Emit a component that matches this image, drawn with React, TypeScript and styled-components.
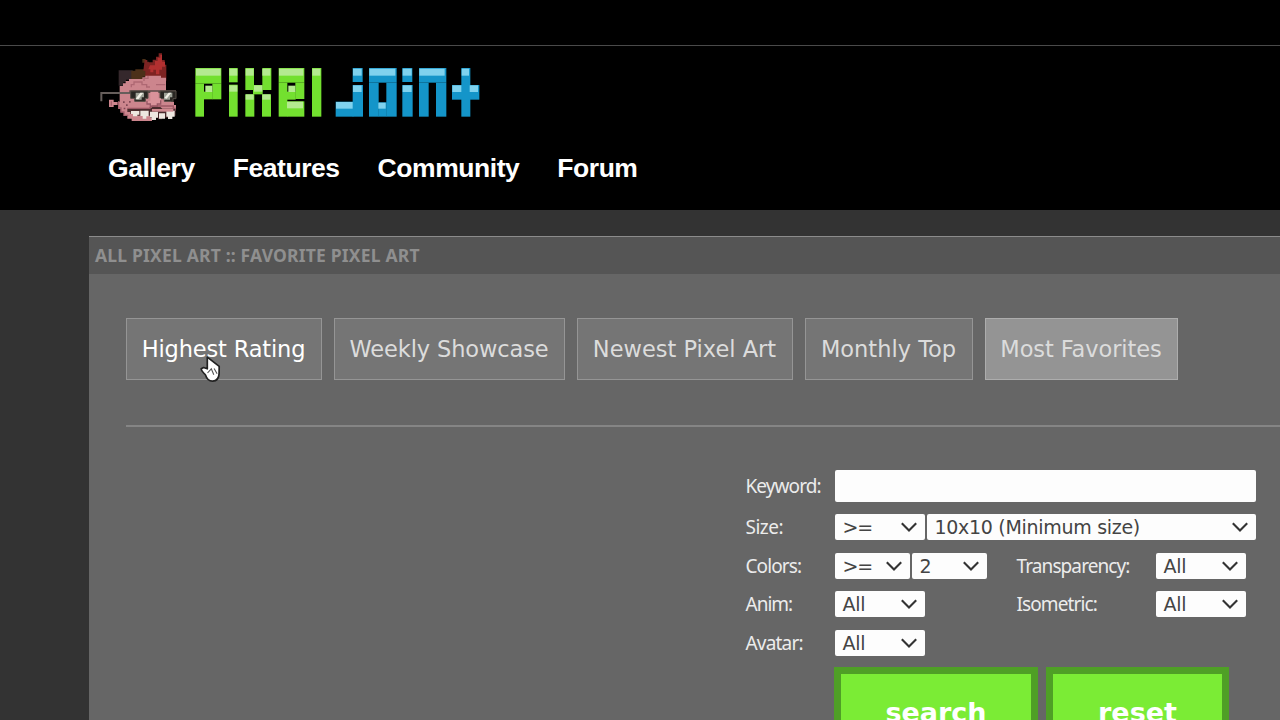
import React from "react";
import styled, { createGlobalStyle } from "styled-components";

const GlobalStyle = createGlobalStyle`
  * { box-sizing: border-box; }
  html, body { margin: 0; height: 100%; overflow: hidden; background: #333; }
`;

const Page = styled.div`
  position: relative;
  width: 1280px;
  height: 720px;
  overflow: hidden;
  background: #333;
  font-family: "DejaVu Sans", Verdana, sans-serif;
`;

const TopStrip = styled.div`
  height: 46px;
  background: #000;
  border-bottom: 1px solid #4a4a4a;
`;

const Header = styled.header`
  height: 164px;
  padding: 6px 0 0 98px;
  background: #000;
`;

const Brand = styled.div`
  display: flex;
  height: 75px;
  gap: 5px;
  svg { display: block; flex: none; }
`;

const Nav = styled.nav`
  display: flex;
  gap: 38px;
  margin: 20px 0 0 10px;
`;

const NavLink = styled.a`
  color: #fff;
  font: bold 26.5px/42px "Liberation Sans", Arial, sans-serif;
  letter-spacing: -0.45px;
`;

const Panel = styled.main`
  width: 1191px;
  height: 484px;
  margin: 26px 0 0 89px;
  background: #666;
  border-top: 1px solid #8c8c8c;
`;

const Crumbs = styled.div`
  height: 37px;
  padding-left: 6px;
  background: #555;
  color: #8f8f8f;
  font: bold 17.5px/37px "Noto Sans", Tahoma, sans-serif;
  white-space: nowrap;
`;

const Tracked = styled.span<{ $spacing: number }>`
  letter-spacing: ${(p) => p.$spacing}px;
`;

const Tabs = styled.div`
  display: flex;
  gap: 12px;
  margin: 44px 0 0 36.5px;
`;

const Tab = styled.button<{ $width: number; $spacing?: number; $state?: "hover" | "active" }>`
  flex: none;
  width: ${(p) => p.$width}px;
  height: 62px;
  padding: 0 0 1px;
  border: 1px solid ${(p) => (p.$state === "active" ? "#adadad" : "#959595")};
  background: ${(p) => (p.$state === "active" ? "#949494" : "#757575")};
  color: ${(p) => (p.$state === "hover" ? "#fff" : "#dcdcdc")};
  font: 22.5px/60px "DejaVu Sans", Verdana, sans-serif;
  letter-spacing: ${(p) => p.$spacing ?? 0}px;
  white-space: nowrap;
`;

const Divider = styled.div`
  height: 2px;
  margin: 44.5px 0 0 36.5px;
  background: #858585;
`;

const SearchForm = styled.form`
  width: 512px;
  margin: 43.5px 0 0 655.5px;
`;

const FormRow = styled.div<{ $height: number }>`
  display: flex;
  align-items: flex-start;
  height: ${(p) => p.$height}px;
`;

const Label = styled.label<{ $width: number; $top?: number; $offset?: number }>`
  flex: none;
  width: ${(p) => p.$width}px;
  margin-left: ${(p) => p.$offset ?? 1}px;
  padding-top: ${(p) => p.$top ?? 0}px;
  color: #ececec;
  font: 19px/26px "Noto Sans", Tahoma, sans-serif;
  white-space: nowrap;
`;

const KeywordInput = styled.input`
  width: 421px;
  height: 32px;
  padding: 0 8px;
  border: 0;
  border-radius: 2px;
  background: #fdfdfd;
`;

const Select = styled.div<{ $width: number }>`
  display: flex;
  flex: none;
  align-items: center;
  justify-content: space-between;
  width: ${(p) => p.$width}px;
  height: 26px;
  margin-right: 2px;
  padding: 0 7px 0 8px;
  border-radius: 2px;
  background: #fdfdfd;
  color: #444;
  font-size: 19px;
  line-height: 26px;
  white-space: nowrap;
`;

const Actions = styled.div`
  display: flex;
  gap: 8px;
  margin-left: 89.5px;
`;

const ActionButton = styled.button<{ $width: number }>`
  width: ${(p) => p.$width}px;
  height: 91px;
  padding: 0;
  border: 7px solid #4f9f26;
  background: #7bec35;
  color: #fff;
  font: bold 27px/76px "DejaVu Sans", Verdana, sans-serif;
`;

const Pointer = styled.svg`
  position: absolute;
  left: 199px;
  top: 355px;
`;

const Chevron = () => (
  <svg width="18" height="12" viewBox="0 0 18 12" fill="none">
    <path d="M1.8 2.2 9 9.4l7.2-7.2" stroke="#333" strokeWidth="2.1" />
  </svg>
);

const Dropdown = ({ width, value, spacing = -0.3 }: { width: number; value: string; spacing?: number }) => (
  <Select $width={width}>
    <Tracked $spacing={spacing}>{value}</Tracked>
    <Chevron />
  </Select>
);

type Block = [number, number, number, number];

// Wordmark blocks: x, y, width, height, three units to the pixel.
const green: Block[] = [
  [31, 39, 78, 47], [31, 86, 26, 99], [82, 86, 27, 47], [57, 110, 26, 23],
  [132, 39, 26, 43], [132, 89, 26, 96],
  [181, 39, 26, 66], [232, 39, 27, 66], [204, 90, 29, 28], [181, 118, 27, 67], [231, 118, 27, 67],
  [281, 39, 77, 44], [281, 83, 26, 102], [331, 83, 27, 49], [306, 110, 26, 24], [306, 139, 52, 46],
  [381, 39, 28, 146],
];
const greenShine: Block[] = [
  [33, 41, 74, 21], [61, 92, 21, 19], [133, 41, 24, 21], [133, 91, 24, 19],
  [182, 41, 24, 21], [232, 41, 24, 21], [207, 91, 25, 19], [182, 118, 24, 16], [232, 118, 24, 16],
  [282, 41, 73, 21], [310, 92, 21, 19], [306, 140, 48, 20], [382, 41, 24, 21],
];
const blue: Block[] = [
  [83, 39, 30, 42], [83, 90, 31, 95], [32, 140, 53, 45],
  [132, 39, 83, 44], [132, 83, 29, 102], [184, 83, 31, 102], [160, 142, 25, 43],
  [232, 39, 30, 42], [232, 90, 31, 95],
  [282, 39, 82, 44], [282, 83, 29, 102], [333, 83, 31, 102],
  [409, 39, 27, 146], [381, 90, 82, 44],
];
const blueShine: Block[] = [
  [84, 41, 26, 21], [84, 91, 26, 20], [33, 141, 50, 20],
  [133, 41, 78, 21], [160, 143, 22, 18], [233, 41, 27, 21], [233, 91, 27, 20],
  [283, 41, 76, 21], [410, 41, 22, 21], [382, 91, 27, 20], [434, 91, 25, 20],
];

const Blocks = ({ items, fill }: { items: Block[]; fill: string }) => (
  <g fill={fill}>
    {items.map(([x, y, w, h], i) => (
      <rect key={i} x={x} y={y} width={w} height={h} />
    ))}
  </g>
);

const WordmarkSvg = styled.svg`
  margin-top: 3px;
`;

const Wordmark = () => (
  <WordmarkSvg width="310" height="75" viewBox="0 0 930 225">
    <Blocks items={green} fill="#73e02f" />
    <Blocks items={greenShine} fill="#b4ea90" />
    <g transform="translate(420 0)">
      <Blocks items={blue} fill="#1495c9" />
      <Blocks items={blueShine} fill="#7fd2ee" />
    </g>
  </WordmarkSvg>
);

const Mascot = () => (
  <svg width="82" height="75" viewBox="24 36 246 225">
    <path d="M86 91h42v28h-20v8h-8v10H86z" fill="#35282c" />
    <path d="M124 92h12v-4h30V68h-9V57h10v8h10v45h-19v7h-34z" fill="#4c3019" />
    <path d="M164 60h8v7h16v-8h10V50h8V40h10v20h8v14h5v48h-63V92h-6z" fill="#7d2322" />
    <path d="M180 76h15V63h8V53h8v-8h5v20h9v15h-9v9h-8v14h-10V89h-8v8h-9v-9h-6z" fill="#b23030" />
    <path d="M89 138h10v-8h8v-7h10v-6h40v-5h9v-5h47v6h15v38l7 22 9 12h8v10h6v17h-11l-8 10h-48l-5 11v10h-61v-7h-13v-9h-10v-10h-10v-10h-7v-22h4z" fill="#cc858d" />
    <path d="M124 142v-8h8v-8h24v8h14v7h10m18-7h28M162 123v-8h12v-7" fill="none" stroke="#ae6873" strokeWidth="4" />
    <path d="M34 184v-25h90" fill="none" stroke="#665e5b" strokeWidth="6" />
    <path d="M118 151h140v8H118z" fill="#5a4b49" />
    <path d="M122 153h52v22h-8v9h-32v-9h-12zM210 153h48v23h-9v8h-26v-8h-13z" fill="#282622" stroke="#544c45" strokeWidth="3" />
    <path d="M137 158h25v14h-7v7h-18zM222 158h25v14h-7v7h-18z" fill="#9da196" />
    <path d="m137 176 14-18h9l-15 20zM223 174l13-16h8l-14 18z" fill="#f0efe5" />
    <path d="M181 155h24v20h8v17h-12v7h-20v-7h-10v-9h10z" fill="#d9929a" />
    <path d="M171 183v9h10v7h21v-7h10v-11" fill="none" stroke="#965765" strokeWidth="4" />
    <path d="M57 179h14v7h12v9H71v6H57z" fill="#cc858d" />
    <path d="M64 184v13M86 184v20h7v12h9v10h13" fill="none" stroke="#a45f6c" strokeWidth="4" />
    <path d="M99 184h5v5h-5zM108 193h5v5h-5zM117 183h5v5h-5zM101 203h5v5h-5z" fill="#7d4654" />
    <path d="M112 206h68l7-5h24l6 5h40v21h-11v6h-30v5h-12v-5h-23v-6h-40v-5h-20v-6h-9z" fill="#4a2b2d" />
    <path d="M123 213h25v11h-6v5h-13v-7h-6zM151 212h25v17h-7v7h-11v-8h-7zM180 215h24v18h-6v7h-13v-8h-5zM207 220h18v16h-18zM229 212h25v18h-7v7h-13v-7h-5z" fill="#eee7e0" />
    <path d="M186 207h64v8h-64z" fill="#d08a90" />
    <path d="M112 205h66l8-7h64v7h7" fill="none" stroke="#9c5864" strokeWidth="4" />
  </svg>
);

const HandPointer = () => (
  <Pointer width="23" height="28" viewBox="0 0 23 28">
    <path
      d="M8.3 2.2v11.6l-3.7-1.3-2.4 1.3c.3 2.6 2.5 4.1 4.3 6.2 1.2 3.8 3.8 6.2 7.2 6.1 4.1-.1 6.2-3.5 6.4-7.5l.1-7.2z"
      fill="#fff" stroke="#222" strokeWidth="1.7" strokeLinejoin="round"
    />
    <path d="m8.5 18 3.8-4.2 2.5 6m.3-6.4 3 5.4" fill="none" stroke="#555" strokeWidth="1.1" />
  </Pointer>
);

export default function App() {
  return (
    <Page>
      <GlobalStyle />
      <TopStrip />
      <Header>
        <Brand>
          <Mascot />
          <Wordmark />
        </Brand>
        <Nav>
          <NavLink>Gallery</NavLink>
          <NavLink>Features</NavLink>
          <NavLink>Community</NavLink>
          <NavLink>Forum</NavLink>
        </Nav>
      </Header>
      <Panel>
        <Crumbs><Tracked $spacing={0.19}>ALL PIXEL ART :: FAVORITE PIXEL ART</Tracked></Crumbs>
        <Tabs>
          <Tab $width={196} $state="hover" $spacing={-0.15}>Highest Rating</Tab>
          <Tab $width={231} $spacing={-0.12}>Weekly Showcase</Tab>
          <Tab $width={216}>Newest Pixel Art</Tab>
          <Tab $width={168}>Monthly Top</Tab>
          <Tab $width={193} $state="active" $spacing={-0.08}>Most Favorites</Tab>
        </Tabs>
        <Divider />
        <SearchForm>
          <FormRow $height={44}>
            <Label $width={89} $top={3}><Tracked $spacing={-0.9}>Keyword:</Tracked></Label>
            <KeywordInput />
          </FormRow>
          <FormRow $height={39}>
            <Label $width={89}><Tracked $spacing={-0.5}>Size:</Tracked></Label>
            <Dropdown width={90} value=">=" spacing={-1.2} />
            <Dropdown width={329} value="10x10 (Minimum size)" />
          </FormRow>
          <FormRow $height={38}>
            <Label $width={89}><Tracked $spacing={-0.9}>Colors:</Tracked></Label>
            <Dropdown width={75} value=">=" spacing={-1.2} />
            <Dropdown width={75} value="2" />
            <Label $width={139} $offset={28}><Tracked $spacing={-0.9}>Transparency:</Tracked></Label>
            <Dropdown width={90} value="All" />
          </FormRow>
          <FormRow $height={39}>
            <Label $width={89}><Tracked $spacing={-1}>Anim:</Tracked></Label>
            <Dropdown width={90} value="All" />
            <Label $width={139} $offset={90}><Tracked $spacing={-0.9}>Isometric:</Tracked></Label>
            <Dropdown width={90} value="All" />
          </FormRow>
          <FormRow $height={37}>
            <Label $width={89}><Tracked $spacing={-0.8}>Avatar:</Tracked></Label>
            <Dropdown width={90} value="All" />
          </FormRow>
          <Actions>
            <ActionButton type="button" $width={204}>search</ActionButton>
            <ActionButton type="button" $width={183}>reset</ActionButton>
          </Actions>
        </SearchForm>
      </Panel>
      <HandPointer />
    </Page>
  );
}
